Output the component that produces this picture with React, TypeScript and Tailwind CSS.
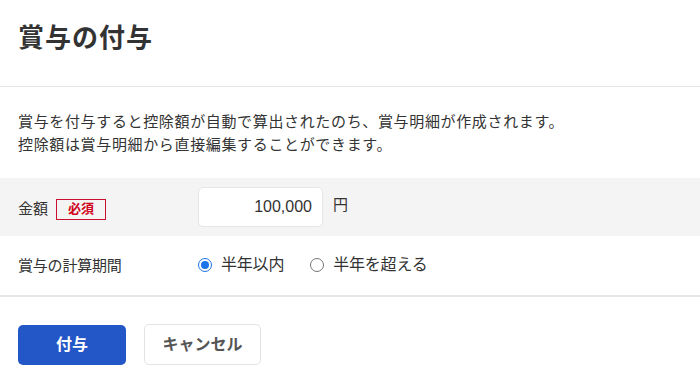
const font = {
  fontFamily: '"Liberation Sans", "Noto Sans CJK JP", sans-serif',
};

function Radio({ checked, label }: { checked: boolean; label: string }) {
  return (
    <label className="flex items-center gap-[9px] cursor-pointer">
      <span
        className={
          checked
            ? "flex h-[14px] w-[14px] items-center justify-center rounded-full border-[1.5px] border-[#1a73e8] bg-white"
            : "flex h-[14px] w-[14px] items-center justify-center rounded-full border border-[#767676] bg-white"
        }
      >
        {checked ? <span className="h-[8px] w-[8px] rounded-full bg-[#1a73e8]" /> : null}
      </span>
      <span className="text-[16px] tracking-[-0.2px] text-[#333]">{label}</span>
    </label>
  );
}

export default function App() {
  return (
    <div className="w-[700px] h-[377px] bg-white text-[#333]" style={font}>
      <div className="flex h-[87px] items-start border-b border-[#e6e6e6] px-[18px] pt-[21px]">
        <h1 className="text-[26px] font-bold leading-[34px] tracking-[1px] text-[#333]">賞与の付与</h1>
      </div>

      <div className="px-[18px] pt-[23px] pb-[22px] text-[15px] leading-[23px] tracking-[0.65px] text-[#333]">
        <p>賞与を付与すると控除額が自動で算出されたのち、賞与明細が作成されます。</p>
        <p>控除額は賞与明細から直接編集することができます。</p>
      </div>

      <div className="flex h-[58px] items-center bg-[#f5f4f4] px-[18px]">
        <div className="flex w-[180px] items-center gap-[8px] pt-[4px]">
          <span className="text-[15px]">金額</span>
          <span className="flex h-[21px] w-[50px] items-center justify-center border border-[#c8102e] text-[13px] font-bold text-[#d0021b]">
            必須
          </span>
        </div>
        <div className="flex items-center gap-[10px]">
          <input
            readOnly
            value="100,000"
            className="h-[40px] w-[125px] rounded-[5px] border border-[#e6e6e6] bg-white px-[10px] text-right text-[16px] text-[#333] outline-none"
            style={font}
          />
          <span className="-mt-[4px] text-[15px]">円</span>
        </div>
      </div>

      <div className="flex h-[61px] items-center border-b-2 border-[#e6e6e6] px-[18px]">
        <div className="w-[180px] pt-[2px] text-[15px] tracking-[-0.2px]">賞与の計算期間</div>
        <div className="flex items-center gap-[26px] pb-[2px]">
          <Radio checked label="半年以内" />
          <Radio checked={false} label="半年を超える" />
        </div>
      </div>

      <div className="flex items-center gap-[18px] px-[18px] pt-[27px]">
        <button className="h-[40px] w-[108px] rounded-[5px] bg-[#2356c6] text-[16px] font-bold text-white">
          付与
        </button>
        <button className="h-[41px] w-[117px] rounded-[5px] border border-[#e3e3e3] bg-white text-[16px] font-bold text-[#555]">
          キャンセル
        </button>
      </div>
    </div>
  );
}
